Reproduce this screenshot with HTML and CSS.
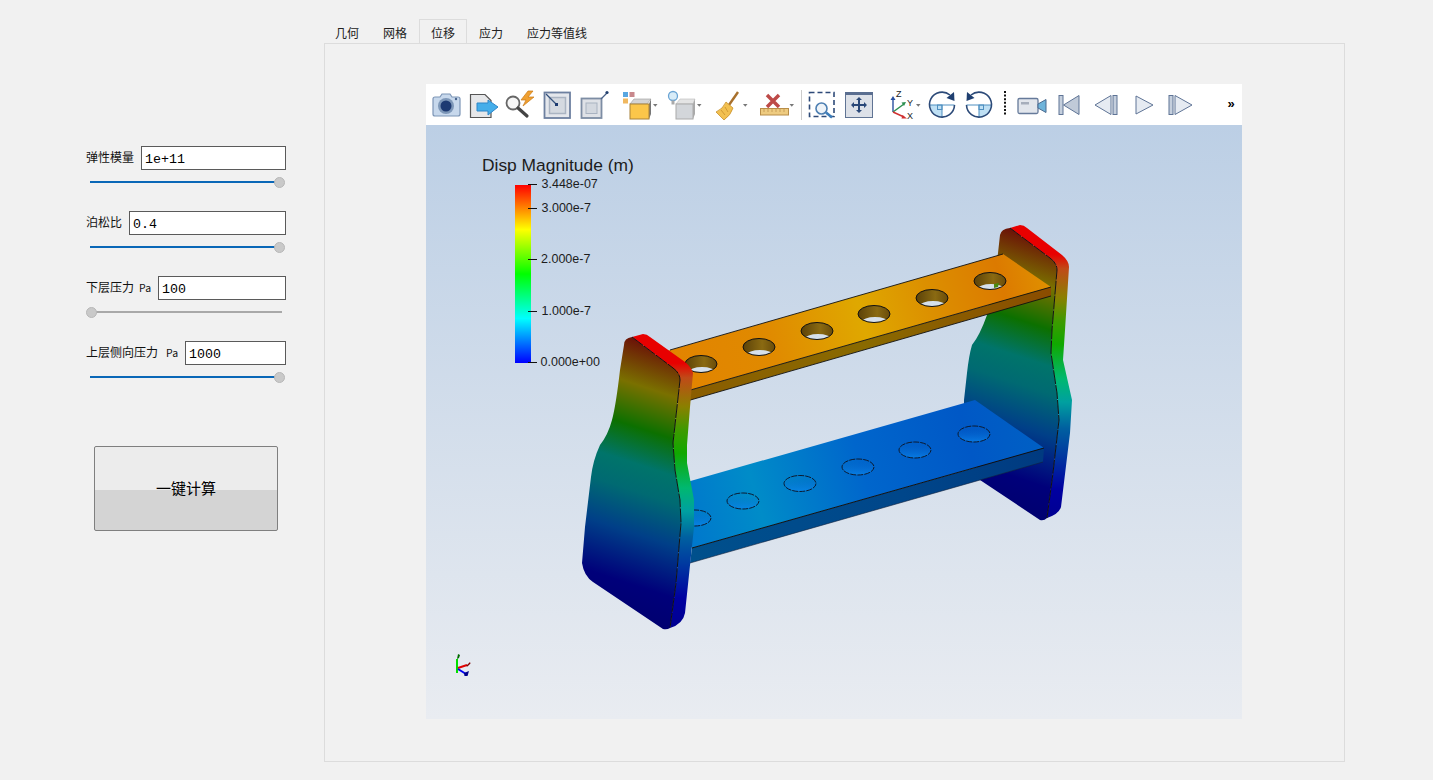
FILE: index.html
```html
<!DOCTYPE html>
<html lang="zh">
<head>
<meta charset="utf-8">
<title>位移</title>
<link rel="stylesheet" href="styles.css">
</head>
<body>
<div class="app">
  <aside class="side">
    <div class="field">
      <div class="field-row"><label class="lbl">弹性模量</label><input class="inp" value="1e+11"></div>
      <div class="slider"><div class="track on"></div><div class="knob end"></div></div>
    </div>
    <div class="field">
      <div class="field-row"><label class="lbl">泊松比</label><input class="inp" value="0.4"></div>
      <div class="slider"><div class="track on"></div><div class="knob end"></div></div>
    </div>
    <div class="field">
      <div class="field-row"><label class="lbl">下层压力<span class="unit">Pa</span></label><input class="inp" value="100"></div>
      <div class="slider low"><div class="track"></div><div class="knob start"></div></div>
    </div>
    <div class="field">
      <div class="field-row"><label class="lbl">上层侧向压力<span class="unit wide">Pa</span></label><input class="inp" value="1000"></div>
      <div class="slider"><div class="track on"></div><div class="knob end"></div></div>
    </div>
    <button class="calc">一键计算</button>
  </aside>
  <main class="main">
    <nav class="tabs">
      <div class="tab">几何</div>
      <div class="tab">网格</div>
      <div class="tab active">位移</div>
      <div class="tab">应力</div>
      <div class="tab">应力等值线</div>
    </nav>
    <section class="pane">
      <div class="viewer">
        <div class="toolbar">
          <svg width="39" height="41" viewBox="426 84 39 41"><path d="M433 99q0-2 2-2h5l2-3h8l2 3h6q2 0 2 2v15q0 2-2 2h-23q-2 0-2-2z" fill="#c7d8ec" stroke="#7c95b6" stroke-width="1.2"/><circle cx="446" cy="106" r="8" fill="#7d97b8"/><circle cx="446" cy="106" r="5.5" fill="#1d3a72"/><circle cx="456" cy="99" r="1.2" fill="#48648c"/></svg>
          <svg width="37" height="41" viewBox="465 84 37 41"><path d="M470.500 94.500h14.500l6 6v17h-20.500z" fill="#e6e7e9" stroke="#555" stroke-width="1.2"/><path d="M477 103h11v-3l10 7-10 8v-4h-11z" fill="#45aeea" stroke="#2f86c8"/></svg>
          <svg width="37" height="41" viewBox="502 84 37 41"><circle cx="513" cy="103" r="6.500" fill="#f6f6f6" stroke="#666" stroke-width="1.800"/><path d="M518 108l9 8" stroke="#444" stroke-width="3.200" stroke-linecap="round"/><path d="M528 91l-7 9h5l-3 6 11-9h-6l5-6z" fill="#f0a030" stroke="#c87a18" stroke-width=".7"/></svg>
          <svg width="36" height="41" viewBox="539 84 36 41"><rect x="544.500" y="92.500" width="25.500" height="25.500" fill="#e4e7ec" stroke="#6d80a0" stroke-width="1.800"/><rect x="549.500" y="97.500" width="16" height="16" fill="#d4d9e0" stroke="#aab4c2" stroke-width="1.500"/><path d="M546 94l11 11" stroke="#33507c" stroke-width="1.200"/><rect x="555" y="103" width="3" height="3" fill="#1c3a70"/></svg>
          <svg width="40" height="41" viewBox="575 84 40 41"><rect x="581.500" y="98.500" width="20" height="19.500" fill="#dfe2e7" stroke="#7d8da4" stroke-width="1.800"/><rect x="586" y="103" width="11" height="10.500" fill="#d3d8df" stroke="#a9b3c1"/><path d="M601 99l6-6" stroke="#4a6288" stroke-width="1.200"/><circle cx="607" cy="92.500" r="1.600" fill="#23406f"/></svg>
          <svg width="47" height="41" viewBox="615 84 47 41"><rect x="623" y="92" width="5" height="5" fill="#58a6e0"/><rect x="629.500" y="92" width="5" height="5" fill="#c8888c"/><rect x="623" y="98.500" width="5" height="5" fill="#f0b860"/><path d="M630 104l4-5h17l-4 5z" fill="#d4d4d4" stroke="#999" stroke-width=".6"/><path d="M649 104l2-5v15l-2 5z" fill="#777"/><rect x="630" y="104" width="19" height="15" fill="#fbc64a" stroke="#a8823a"/><path d="M653 104h4.500l-2.200 2.800z" fill="#777"/></svg>
          <svg width="46" height="41" viewBox="662 84 46 41"><circle cx="673" cy="96" r="4.500" fill="#d8ecf8" stroke="#6aa4d4" stroke-width="1.300"/><path d="M671.500 100.500h3v4h-3z" fill="#aaa"/><path d="M676 104l4-5h15l-2 5z" fill="#e4e4e4" stroke="#bbb" stroke-width=".6"/><path d="M693 104l2-5v15l-2 5z" fill="#aaa"/><rect x="676" y="104" width="17" height="15" fill="#d3d6da" stroke="#aaa"/><path d="M697 104h4.500l-2.200 2.800z" fill="#777"/></svg>
          <svg width="46" height="41" viewBox="708 84 46 41"><path d="M738 92l-9 13" stroke="#a8702c" stroke-width="2.400"/><path d="M726 102l7 6q-2 7-9 12l-8-8q7-3 10-10z" fill="#f2c050" stroke="#c8902c" stroke-width=".8"/><path d="M721 110l4 5M725 107l3 5" stroke="#c8902c" stroke-width=".8"/><path d="M743 104h4.500l-2.200 2.800z" fill="#777"/></svg>
          <svg width="45" height="41" viewBox="754 84 45 41"><path d="M767 95l12 12M779 95l-12 12" stroke="#bd4a48" stroke-width="3.500"/><rect x="760.500" y="108.500" width="28" height="6.500" fill="#eecb80" stroke="#b88d48"/><path d="M764 109v3M768 109v3M772 109v3M776 109v3M780 109v3M784 109v3" stroke="#b88d48" stroke-width=".7"/><path d="M789.500 104h4.500l-2.200 2.800z" fill="#777"/></svg>
          <svg width="6" height="41" viewBox="799 84 6 41"><path d="M801.500 90v30" stroke="#ccc"/></svg>
          <svg width="35" height="41" viewBox="805 84 35 41"><rect x="809.500" y="92.500" width="24.500" height="24" fill="none" stroke="#2e4a78" stroke-width="1.600" stroke-dasharray="5 3"/><circle cx="821.500" cy="108.500" r="5.500" fill="#eef3f8" stroke="#4d7fb2" stroke-width="1.600"/><path d="M826 112.500l6 5" stroke="#3c7cb8" stroke-width="2.600"/></svg>
          <svg width="42" height="41" viewBox="840 84 42 41"><rect x="845.500" y="92.500" width="27" height="25" fill="#dde1e8" stroke="#607494"/><rect x="845" y="92" width="28" height="3" fill="#5a6e90"/><path d="M859 97l3 3h-2v4h4v-2l3 3-3 3v-2h-4v4h2l-3 3-3-3h2v-4h-4v2l-3-3 3-3v2h4v-4h-2z" fill="#2a4878"/></svg>
          <svg width="43" height="41" viewBox="882 84 43 41"><path d="M893 112v-13" stroke="#2a50a0" stroke-width="1.400"/><path d="M893 96l-2.500 4h5z" fill="#2a50a0"/><path d="M893 112l11-8" stroke="#2c9050" stroke-width="1.400"/><path d="M906 102l-4.500 .5 2.500 3.500z" fill="#2c9050"/><path d="M893 112l11 5" stroke="#d03030" stroke-width="1.400"/><path d="M907 118.500l-4.500-3.500-1 3.500z" fill="#d03030"/><text class="axl" x="896" y="97">Z</text><text class="axl" x="907" y="106">Y</text><text class="axl" x="907" y="119">X</text><path d="M916 104h4.500l-2.200 2.800z" fill="#777"/></svg>
          <svg width="35" height="41" viewBox="925 84 35 41"><path d="M929.500 105h12.500v12.500a12.500 12.500 0 0 1-12.500-12.500z" fill="#bfe0f4"/><path d="M929.500 105h25" stroke="#4f8fc0"/><path d="M942 105v12.500" stroke="#4f8fc0"/><rect x="937.500" y="105" width="4.500" height="4.500" fill="none" stroke="#4f8fc0"/><path d="M950 95a12.500 12.500 0 1 0 4.500 10" fill="none" stroke="#2c4a78" stroke-width="1.600"/><path d="M954 92l.5 9-8-3z" fill="#1f3f70"/></svg>
          <svg width="40" height="41" viewBox="960 84 40 41"><path d="M991.500 105h-12.500v12.500a12.500 12.500 0 0 0 12.500-12.500z" fill="#bfe0f4"/><path d="M966.500 105h25" stroke="#4f8fc0"/><path d="M979 105v12.500" stroke="#4f8fc0"/><rect x="979" y="105" width="4.500" height="4.500" fill="none" stroke="#4f8fc0"/><path d="M971 95a12.500 12.500 0 1 1-4.500 10" fill="none" stroke="#2c4a78" stroke-width="1.600"/><path d="M967 92l-.5 9 8-3z" fill="#1f3f70"/></svg>
          <svg width="10" height="41" viewBox="1000 84 10 41"><path d="M1005 91v25" stroke="#111" stroke-width="2" stroke-dasharray="2 1.600"/></svg>
          <svg width="42" height="41" viewBox="1010 84 42 41"><rect x="1018" y="98.500" width="20" height="15" rx="1.500" fill="#e2e6ec" stroke="#667a9a" stroke-width="1.300"/><rect x="1021" y="102" width="8" height="2.500" fill="#a6aebb"/><path d="M1038 104l8-4.500v13l-8-4.500z" fill="#6fb4da" stroke="#4a6a90"/></svg>
          <svg width="35" height="41" viewBox="1052 84 35 41"><rect x="1059" y="95.500" width="4" height="19" fill="#c5cfdd" stroke="#5f7496"/><path d="M1079 95.500v19l-15.500-9.500z" fill="#c0cad8" stroke="#5f7496"/></svg>
          <svg width="40" height="41" viewBox="1087 84 40 41"><path d="M1111 95.500v19l-16-9.500z" fill="#e6ebf2" stroke="#5f7496"/><rect x="1113" y="95.500" width="4" height="19" fill="#c5cfdd" stroke="#5f7496"/></svg>
          <svg width="34" height="41" viewBox="1127 84 34 41"><path d="M1136 96v18l17-9z" fill="#e6ebf2" stroke="#5f7496"/></svg>
          <svg width="59" height="41" viewBox="1161 84 59 41"><rect x="1169" y="95.500" width="4" height="19" fill="#c5cfdd" stroke="#5f7496"/><path d="M1175 95.500v19l17-9.500z" fill="#e6ebf2" stroke="#5f7496"/></svg>
          <div class="more">»</div>
        </div>
        <div class="render">
          <svg class="scene" width="816" height="594" viewBox="426 125 816 594">
            <defs>
              <linearGradient id="frontL" gradientUnits="userSpaceOnUse" x1="650" y1="340" x2="560" y2="616"><stop offset="0" stop-color="#6a0a08"/><stop offset=".16" stop-color="#7a7000"/><stop offset=".3" stop-color="#0c7000"/><stop offset=".42" stop-color="#00746a"/><stop offset=".51" stop-color="#006a72"/><stop offset=".65" stop-color="#003f88"/><stop offset=".82" stop-color="#00007a"/><stop offset="1" stop-color="#00006a"/></linearGradient>
              <linearGradient id="frontR" gradientUnits="userSpaceOnUse" x1="1028" y1="231" x2="938" y2="507"><stop offset="0" stop-color="#6a0a08"/><stop offset=".16" stop-color="#7a7000"/><stop offset=".3" stop-color="#0c7000"/><stop offset=".42" stop-color="#00746a"/><stop offset=".51" stop-color="#006a72"/><stop offset=".65" stop-color="#003f88"/><stop offset=".82" stop-color="#00007a"/><stop offset="1" stop-color="#00006a"/></linearGradient>
              <linearGradient id="sideL" gradientUnits="userSpaceOnUse" x1="0" y1="340" x2="0" y2="630"><stop offset=".08" stop-color="#e80000"/><stop offset=".13" stop-color="#c04a18"/><stop offset=".23" stop-color="#8a8000"/><stop offset=".31" stop-color="#3e9a00"/><stop offset=".39" stop-color="#10a800"/><stop offset=".51" stop-color="#00b870"/><stop offset=".59" stop-color="#00a0a0"/><stop offset=".68" stop-color="#0060a0"/><stop offset=".77" stop-color="#003aa0"/><stop offset=".89" stop-color="#0000a0"/><stop offset="1" stop-color="#000090"/></linearGradient>
              <linearGradient id="sideR" gradientUnits="userSpaceOnUse" x1="0" y1="231" x2="0" y2="521"><stop offset=".08" stop-color="#e80000"/><stop offset=".13" stop-color="#c04a18"/><stop offset=".23" stop-color="#8a8000"/><stop offset=".31" stop-color="#3e9a00"/><stop offset=".39" stop-color="#10a800"/><stop offset=".51" stop-color="#00b870"/><stop offset=".59" stop-color="#00a0a0"/><stop offset=".68" stop-color="#0060a0"/><stop offset=".77" stop-color="#003aa0"/><stop offset=".89" stop-color="#0000a0"/><stop offset="1" stop-color="#000090"/></linearGradient>
              <linearGradient id="topFace" gradientUnits="userSpaceOnUse" x1="680" y1="370" x2="1045" y2="270"><stop offset="0" stop-color="#e28400"/><stop offset=".25" stop-color="#e08a00"/><stop offset=".5" stop-color="#dfa800"/><stop offset=".68" stop-color="#dc9000"/><stop offset=".88" stop-color="#dc7a00"/><stop offset="1" stop-color="#e09000"/></linearGradient>
              <linearGradient id="topEdge" gradientUnits="userSpaceOnUse" x1="680" y1="0" x2="1051" y2="0"><stop offset="0" stop-color="#8a5c00"/><stop offset=".5" stop-color="#8a6a00"/><stop offset="1" stop-color="#8a4c00"/></linearGradient>
              <linearGradient id="lowFace" gradientUnits="userSpaceOnUse" x1="690" y1="530" x2="1040" y2="430"><stop offset="0" stop-color="#0078cc"/><stop offset=".2" stop-color="#008cc8"/><stop offset=".5" stop-color="#0066cc"/><stop offset=".8" stop-color="#0058c6"/><stop offset="1" stop-color="#0060c4"/></linearGradient>
              <linearGradient id="lowEdge" gradientUnits="userSpaceOnUse" x1="690" y1="0" x2="1044" y2="0"><stop offset="0" stop-color="#00508c"/><stop offset=".6" stop-color="#00468a"/><stop offset="1" stop-color="#003a80"/></linearGradient>
              <linearGradient id="wall" x1="0" y1="0" x2="1" y2="0"><stop offset="0" stop-color="#5c4208"/><stop offset=".6" stop-color="#8a6a12"/><stop offset="1" stop-color="#6a4c0a"/></linearGradient>
              <linearGradient id="dimple" x1="0" y1="0" x2="0" y2="1"><stop offset=".2" stop-color="#0a6ad0" stop-opacity="0"/><stop offset="1" stop-color="#0a88f0" stop-opacity=".7"/></linearGradient>
              <linearGradient id="bar" x1="0" y1="0" x2="0" y2="1"><stop offset="0" stop-color="#ff0000"/><stop offset=".25" stop-color="#ffff00"/><stop offset=".5" stop-color="#00ff00"/><stop offset=".75" stop-color="#00ffff"/><stop offset="1" stop-color="#0000ff"/></linearGradient>
              <clipPath id="holeClip"><ellipse cx="0" cy="0" rx="16" ry="8.500"/></clipPath>
              <g id="hole"><ellipse rx="16" ry="8.500" fill="url(#wall)"/><ellipse cx="1" cy="8" rx="13" ry="5" fill="#d6e0eb" clip-path="url(#holeClip)"/><ellipse rx="16" ry="8.500" fill="none" stroke="#111" stroke-width="1"/></g>
              <g id="pit"><ellipse rx="16" ry="8" fill="url(#dimple)" stroke="#0c1a30" stroke-width="1" stroke-dasharray="6 1"/></g>
            </defs>

            <text class="sb-title" x="482" y="171">Disp Magnitude (m)</text>
            <rect x="515" y="185" width="16" height="178" fill="url(#bar)"/>
            <path d="M528 184.500h9M528 208.500h9M528 259.500h9M528 311.500h9M528 362.500h9" stroke="#111"/>
            <text class="sb-label" x="541.500" y="188">3.448e-07</text>
            <text class="sb-label" x="541.500" y="211.500">3.000e-7</text>
            <text class="sb-label" x="541" y="262.500">2.000e-7</text>
            <text class="sb-label" x="541.500" y="314.500">1.000e-7</text>
            <text class="sb-label" x="540.500" y="365.500">0.000e+00</text>

            <path d="M1000 235Q1001 229 1010 228L1050 258Q1057 263 1057 270L1052 330L1051 353L1057 393L1059 420L1053 473L1047 518Q1044 521 1040 520L980 480L964 420L964 400L967 373Q969 355 972 345Q980 335 987 315Q993 290 998 253Z" fill="url(#frontR)"/>
            <path d="M1010 228L1020 225Q1024 225 1027 228L1062 255Q1069 261 1069 267L1065 330L1063 360L1072 400L1070 433L1061 507Q1059 514 1047 518L1053 473L1059 420L1057 393L1051 353L1052 330L1057 270Q1057 263 1050 258Z" fill="url(#sideR)"/>
            <path d="M1010 228L1050 258Q1057 263 1057 270L1052 330L1051 353L1057 393L1059 420L1053 473L1047 518" fill="none" stroke="#111" stroke-width="1" stroke-dasharray="14 1"/>

            <polygon points="680,484 975,400 1044,448 692,548" fill="url(#lowFace)"/>
            <polygon points="692,548 1044,448 1043,462 690,563" fill="url(#lowEdge)"/>
            <path d="M692 548L1044 448" stroke="#111" stroke-width="1"/>
            <path d="M690 563L1043 462" stroke="#10203a" stroke-width=".6"/>
            <use href="#pit" x="695" y="518"/>
            <use href="#pit" x="743" y="501"/>
            <use href="#pit" x="800" y="483.500"/>
            <use href="#pit" x="858" y="467"/>
            <use href="#pit" x="915" y="450"/>
            <use href="#pit" x="974" y="434"/>

            <polygon points="660,353 1003,254 1051,287 680,393" fill="url(#topFace)"/>
            <polygon points="680,393 1051,287 1051,296 680,403" fill="url(#topEdge)"/>
            <path d="M670 350L1003 254M680 393L1051 287M680 403L1051 296" fill="none" stroke="#111" stroke-width=".9"/>
            <use href="#hole" x="701" y="364"/>
            <use href="#hole" x="759" y="347"/>
            <use href="#hole" x="817" y="331"/>
            <use href="#hole" x="874" y="314"/>
            <use href="#hole" x="932" y="298"/>
            <use href="#hole" x="990" y="281"/>
            <path d="M994 284l5-1-1 4-4 1z" fill="#4a8a10"/>

            <path d="M624 345Q624 338 632 337L673 368Q680 373 680 380L677 407L673 443L675 470L680 500L681 523L676 583L670 628Q667 630 663 629L593 582Q584 576 582 563L585 527L591 477Q593 460 600 445Q608 435 612 420Q616 405 620 370Z" fill="url(#frontL)"/>
            <path d="M632 337L643 334Q647 334 650 337L685 362Q692 368 693 373L690 407L687 445L687 463L694 500L694 527L685 613Q683 624 670 628L676 583L681 523L680 500L675 470L673 443L677 407L680 380Q680 373 673 368Z" fill="url(#sideL)"/>
            <path d="M632 337L673 368Q680 373 680 380L677 407L673 443L675 470L680 500L681 523L676 583L670 628" fill="none" stroke="#111" stroke-width="1" stroke-dasharray="14 1"/>

            <path d="M457 673V659" stroke="#00e000" stroke-width="2"/><path d="M457 659l1-5 2 1-1 3z" fill="#006800"/>
            <path d="M458 668l9-3" stroke="#e00000" stroke-width="2"/><path d="M466 666l4-4 .5 1.500-3 3z" fill="#800000"/>
            <path d="M458 669l8 5" stroke="#0000f0" stroke-width="2"/><path d="M464 673l5-2-1.500 5h-3z" fill="#00008c"/>
          </svg>
        </div>
      </div>
    </section>
  </main>
</div>
</body>
</html>
```
FILE: styles.css
```css
* { box-sizing: border-box; }
html, body { margin: 0; height: 100%; }
body {
  background: #f1f1f1;
  color: #111;
  font-family: "Noto Sans CJK SC", "Liberation Sans", sans-serif;
  font-size: 12px;
  overflow: hidden;
}
.app { display: flex; height: 780px; }

/* left form */
.side {
  width: 324px;
  flex: none;
  padding: 146px 0 0 86px;
  display: flex;
  flex-direction: column;
}
.field { width: 200px; height: 42px; margin-bottom: 23px; }
.field-row { display: flex; align-items: center; height: 24px; gap: 7px; }
.lbl { white-space: nowrap; line-height: 16px; margin-top: -2px; }
.unit { font-size: 10.5px; margin-left: 5px; }
.unit.wide { margin-left: 8px; }
.inp {
  flex: 1;
  min-width: 0;
  height: 24px;
  border: 1px solid #5a5a5a;
  border-radius: 0;
  background: #fff;
  color: #000;
  padding: 3px 3px 0;
  font-family: "Liberation Mono", monospace;
  font-size: 13.3px;
  outline: none;
}
.slider {
  position: relative;
  height: 12px;
  margin-top: 6px;
  padding: 0 4px;
  display: flex;
  align-items: center;
}
.track { flex: 1; height: 2px; background: #a9a9a9; }
.track.on { background: #0a67b7; margin-right: 2px; }
.knob {
  position: absolute;
  top: 1px;
  width: 11px;
  height: 11px;
  border-radius: 50%;
  background: #c9c9c9;
  border: 1px solid #b7b7b7;
}
.knob.end { right: 1px; }
.knob.start { left: 0; }
.calc {
  width: 184px;
  height: 85px;
  margin: 40px 0 0 8px;
  padding: 0 0 3px;
  border: 1px solid #7f7f7f;
  border-radius: 2px;
  background: linear-gradient(to bottom, #ececec 0 52%, #d4d4d4 52% 100%);
  color: #000;
  font-family: "Noto Sans CJK SC", sans-serif;
  font-size: 15px;
}

/* tabs */
.main { padding-top: 19px; width: 1021px; flex: none; display: flex; flex-direction: column; }
.tabs { display: flex; height: 24px; margin-left: -1px; }
.tab {
  padding: 0 11px;
  line-height: 25px;
  border: 1px solid transparent;
  border-bottom: 0;
  color: #222;
}
.tab.active { background: #f1f1f1; border-color: #dcdcdc; }
.pane {
  height: 719px;
  border: 1px solid #dcdcdc;
  padding: 40px 0 0 101px;
}
.viewer { width: 816px; }

/* toolbar */
.toolbar { height: 41px; background: #fff; display: flex; }
.toolbar svg { display: block; flex: none; }
.axl { font-family: "Liberation Sans", sans-serif; font-size: 9px; fill: #222; }
.more { flex: 1; text-align: center; font-family: "Liberation Sans", sans-serif; font-weight: 700; font-size: 13px; line-height: 40px; color: #000; }

/* render view */
.render {
  height: 594px;
  background: linear-gradient(to bottom, #bccfe5, #e9ecf1);
}
.scene { display: block; }
.sb-title { font-family: "Liberation Sans", sans-serif; font-size: 17.400px; fill: #1c1c1c; }
.sb-label { font-family: "Liberation Sans", sans-serif; font-size: 12.500px; fill: #1c1c1c; }
```
